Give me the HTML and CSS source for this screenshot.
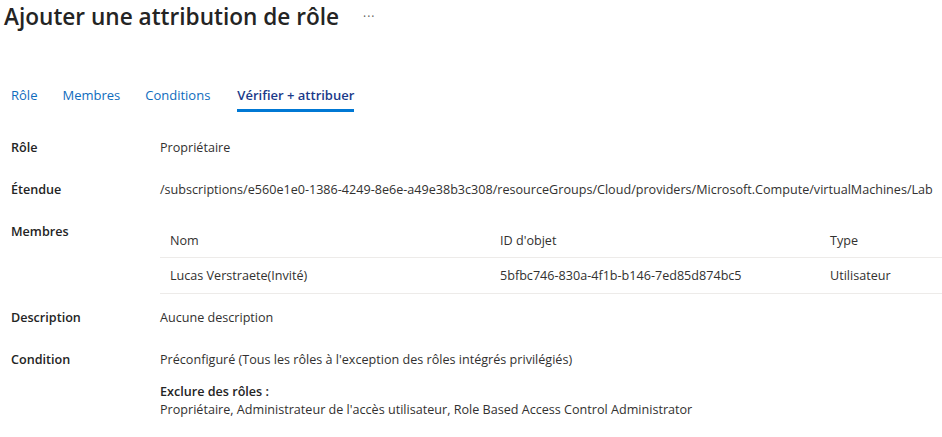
FILE: index.html
```html
<!DOCTYPE html>
<html lang="fr">
<head>
<meta charset="utf-8">
<link rel="stylesheet" href="styles.css">
</head>
<body>
<header class="header">
  <h1 class="title">Ajouter une attribution de rôle</h1>
  <span class="more">···</span>
</header>
<nav class="tabs">
  <a class="tab">Rôle</a>
  <a class="tab">Membres</a>
  <a class="tab">Conditions</a>
  <a class="tab active">Vérifier + attribuer</a>
</nav>
<section class="details">
  <div class="row">
    <div class="label">Rôle</div>
    <div class="value">Propriétaire</div>
  </div>
  <div class="row">
    <div class="label">Étendue</div>
    <div class="value">/subscriptions/e560e1e0-1386-4249-8e6e-a49e38b3c308/resourceGroups/Cloud/providers/Microsoft.Compute/virtualMachines/Lab</div>
  </div>
  <div class="row members">
    <div class="label">Membres</div>
    <div class="value">
      <div class="table">
        <div class="trow thead">
          <div class="c1">Nom</div>
          <div class="c2">ID d'objet</div>
          <div class="c3">Type</div>
        </div>
        <div class="trow">
          <div class="c1">Lucas Verstraete(Invité)</div>
          <div class="c2">5bfbc746-830a-4f1b-b146-7ed85d874bc5</div>
          <div class="c3">Utilisateur</div>
        </div>
      </div>
    </div>
  </div>
  <div class="row">
    <div class="label">Description</div>
    <div class="value">Aucune description</div>
  </div>
  <div class="row">
    <div class="label">Condition</div>
    <div class="value">
      <div>Préconfiguré (Tous les rôles à l'exception des rôles intégrés privilégiés)</div>
      <div class="exclude-title">Exclure des rôles :</div>
      <div>Propriétaire, Administrateur de l'accès utilisateur, Role Based Access Control Administrator</div>
    </div>
  </div>
</section>
</body>
</html>
```
FILE: styles.css
```css
* { box-sizing: border-box; }
body {
  margin: 0;
  font-family: "Open Sans", "Noto Sans", sans-serif;
  font-size: 13px;
  color: #323130;
  background: #fff;
  width: 942px;
  overflow: hidden;
}
.header {
  display: flex;
  align-items: center;
  height: 32px;
  padding-left: 4px;
}
.title {
  margin: 0;
  font-size: 22.6px;
  font-weight: 600;
  color: #242424;
}
.more {
  margin-left: 24px;
  font-size: 12px;
  color: #605e5c;
  letter-spacing: 1px;
}
.tabs {
  display: flex;
  gap: 25px;
  margin-top: 52px;
  padding-left: 11px;
  height: 28px;
}
.tab {
  color: #0f6cbd;
  font-size: 13px;
  line-height: 22px;
  height: 28px;
  border-bottom: 3px solid transparent;
}
.active {
  margin-left: 2px;
  color: #1b3a8a;
  font-weight: 600;
  border-bottom-color: #0078d4;
}
.details {
  padding-left: 11px;
  margin-top: 27px;
  font-size: 12.6px;
}
.row {
  display: flex;
  line-height: 18px;
  margin-bottom: 24px;
}
.label {
  width: 149px;
  flex: none;
  font-weight: 600;
  color: #242424;
}
.value {
  flex: 1;
  white-space: nowrap;
}
.members { margin-bottom: 15px; }
.trow {
  display: flex;
  height: 36px;
  align-items: center;
  border-bottom: 1px solid #edebe9;
  padding-left: 10px;
}
.thead {
  height: 35px;
  align-items: flex-start;
  padding-top: 9px;
}
.c1 { width: 330px; }
.c2 { width: 330px; }
.c3 { flex: 1; }
.exclude-title {
  margin-top: 14px;
  font-weight: 600;
  color: #242424;
}
```
